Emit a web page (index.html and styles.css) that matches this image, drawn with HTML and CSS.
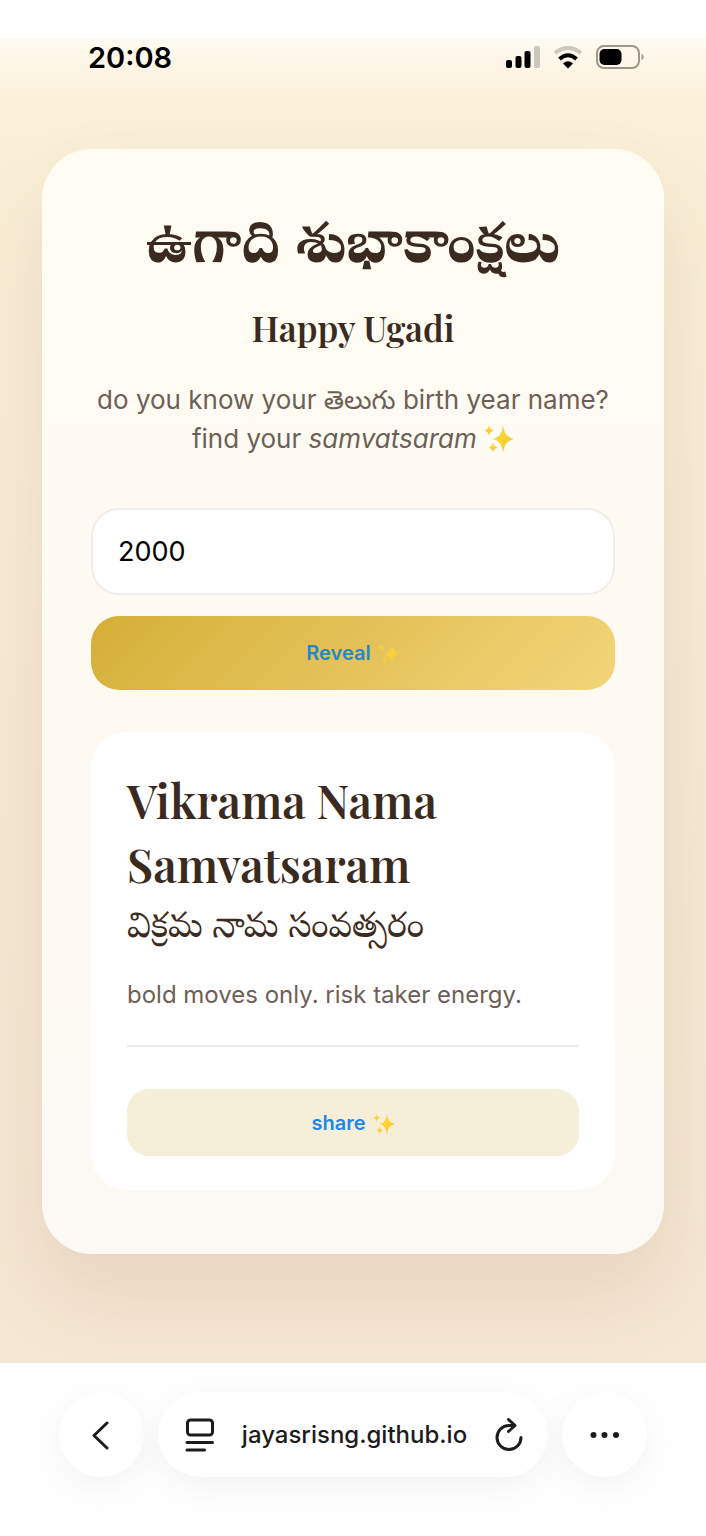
FILE: index.html
```html
<!DOCTYPE html>
<html lang="en">
<head>
    <meta charset="UTF-8">
    <meta name="viewport" content="width=device-width, initial-scale=1.0">
    <title>Happy Ugadi</title>
    <link rel="stylesheet" href="styles.css">
</head>
<body>
    <svg width="0" height="0" class="defs" aria-hidden="true">
        <linearGradient id="gold" x1="0" y1="0" x2="1" y2="1">
            <stop offset="0" stop-color="#f6cf62"/>
            <stop offset="0.5" stop-color="#fdd42c"/>
            <stop offset="1" stop-color="#efb455"/>
        </linearGradient>
        <symbol id="sparkles" viewBox="0 0 30 30">
            <path fill="url(#gold)" d="M19 1 Q20 13 30 15 Q20 17 19 29 Q18 17 9 15 Q18 13 19 1Z"/>
            <path fill="url(#gold)" d="M5 1 Q5.500 5.500 10 6.500 Q5.500 7.500 5 12 Q4.500 7.500 0 6.500 Q4.500 5.500 5 1Z"/>
            <path fill="url(#gold)" d="M9 18 Q9.500 22.500 13.500 23.500 Q9.500 24.500 9 29 Q8.500 24.500 4.500 23.500 Q8.500 22.500 9 18Z"/>
        </symbol>
    </svg>

    <div class="page">
        <header class="status-bar">
            <span class="time">20:08</span>
            <div class="status-icons">
                <svg width="35" height="24" viewBox="0 0 35 24">
                    <rect x="1" y="15" width="6" height="8" rx="2"/>
                    <rect x="10.500" y="11" width="6" height="12" rx="2"/>
                    <rect x="19.500" y="6" width="6" height="17" rx="2"/>
                    <rect x="29" y="1" width="6" height="22" rx="2" fill="#cbc7bb"/>
                </svg>
                <svg width="30" height="24" viewBox="0 0 30 24" fill="none" stroke-width="4">
                    <path d="M2 8 Q15 -2 28 8" stroke="#cbc7bb"/>
                    <path d="M6.500 14 Q15 6.500 23.500 14" stroke="#000"/>
                    <path d="M10 18.500 Q15 14 20 18.500 L15 23.500Z" fill="#000"/>
                </svg>
                <svg width="48" height="24" viewBox="0 0 48 24">
                    <rect x="1" y="1" width="42" height="22" rx="7" fill="none" stroke="#9c978d" stroke-width="2"/>
                    <rect x="3.500" y="4" width="22" height="16" rx="5"/>
                    <path d="M45.500 8.500 Q50 12 45.500 15.500Z" fill="#9c978d"/>
                </svg>
            </div>
        </header>

        <main class="card">
            <h1 lang="te">ఉగాది శుభాకాంక్షలు</h1>
            <h2>Happy Ugadi</h2>
            <p class="subtitle">do you know your <span lang="te">తెలుగు</span> birth year name?<br>find your <em>samvatsaram</em> <svg class="sparkle"><use href="#sparkles"/></svg></p>

            <form id="yearForm">
                <input type="text" id="year" name="year" value="2000" inputmode="numeric" aria-label="Birth year">
                <button type="button" class="reveal">Reveal <svg class="sparkle-small"><use href="#sparkles"/></svg></button>
            </form>

            <section class="result">
                <h3>Vikrama Nama Samvatsaram</h3>
                <p class="telugu-name" lang="te">విక్రమ నామ సంవత్సరం</p>
                <p class="meaning">bold moves only. risk taker energy.</p>
                <hr>
                <button type="button" class="share">share <svg class="sparkle-small"><use href="#sparkles"/></svg></button>
            </section>
        </main>
    </div>

    <nav class="browser-bar">
        <button type="button" class="round" aria-label="Back">
            <svg width="20" height="30" viewBox="0 0 20 30"><path d="M15 3 L2 15.500 L15 28"/></svg>
        </button>
        <div class="address">
            <button type="button" aria-label="Page menu">
                <svg width="30" height="34" viewBox="0 0 30 34">
                    <rect x="2.500" y="2" width="25" height="15" rx="3"/>
                    <path d="M2 24.500 H27.500 M2 32 H19.500"/>
                </svg>
            </button>
            <a href="#">jayasrisng.github.io</a>
            <button type="button" aria-label="Reload">
                <svg width="30" height="34" viewBox="0 0 30 34">
                    <path d="M27 19.500 A12 12 0 1 1 15 7.500 H21 M14.500 1.500 L21 7.500 L14.500 13.500"/>
                </svg>
            </button>
        </div>
        <button type="button" class="round" aria-label="More">
            <svg class="dots" width="30" height="8" viewBox="0 0 30 8"><circle cx="3.500" cy="4" r="3"/><circle cx="14.500" cy="4" r="3"/><circle cx="26" cy="4" r="3"/></svg>
        </button>
    </nav>
</body>
</html>
```

FILE: styles.css
```css
* {
    box-sizing: border-box;
}

body {
    font-family: Inter, "Noto Sans Telugu", "Noto Sans", sans-serif;
    background-color: #fff;
    margin: 0;
    padding-top: 39px;
    min-height: 100vh;
}

h1, h2, h3, p {
    margin: 0;
}

button {
    font-family: inherit;
    border: none;
    cursor: pointer;
}

.defs {
    position: absolute;
}

.page {
    padding: 0 42px 109px;
    background: linear-gradient(180deg, #fffaf0 0, #fbf0da 60px, #f9edd5 200px, #f6e8d4 60%, #f5e6d3 100%);
    overflow: hidden;
}

.status-bar {
    display: flex;
    justify-content: space-between;
    align-items: center;
    height: 36px;
    margin-bottom: 74px;
    padding: 0 20px 0 46px;
}

.time {
    font-size: 29px;
    font-weight: 600;
}

.status-icons {
    display: flex;
    gap: 13px;
}

.card {
    padding: 64px 49px;
    border-radius: 50px;
    background: linear-gradient(180deg, #fffcf4, #fefaf2 60%, #fcf8f4);
    box-shadow: 0 40px 80px rgba(120, 80, 50, 0.12);
    color: #3b2a20;
    text-align: center;
}

h1 {
    padding-top: 6px;
    font-family: "Noto Serif Telugu", "Liberation Serif", serif;
    font-size: 56px;
    font-weight: 700;
    line-height: 64px;
    white-space: nowrap;
}

h2 {
    margin-top: 21px;
    font-family: "Playfair Display", "Liberation Serif", serif;
    font-size: 35px;
    font-weight: 600;
    line-height: 48px;
}

.subtitle {
    margin-top: 28px;
    color: #6d5f57;
    font-size: 26px;
    line-height: 39px;
}

.sparkle {
    width: 30px;
    height: 30px;
    vertical-align: -6px;
}

.sparkle-small {
    width: 22px;
    height: 22px;
    margin-left: 2px;
    vertical-align: -5px;
}

form {
    display: flex;
    flex-direction: column;
    gap: 21px;
    margin-top: 50px;
}

#year {
    width: 100%;
    height: 87px;
    padding: 0 25px;
    border: 2px solid #f0edea;
    border-radius: 28px;
    background-color: #fff;
    color: #000;
    font-family: inherit;
    font-size: 27px;
}

.reveal {
    height: 74px;
    border-radius: 28px;
    background: linear-gradient(135deg, #d4af37, #f3d57a);
    color: #2488c4;
    font-size: 20px;
    font-weight: 600;
}

.reveal svg {
    opacity: 0.8;
}

.result {
    margin-top: 42px;
    padding: 36px 36px 34px;
    border-radius: 36px;
    background-color: #fff;
    text-align: left;
}

h3 {
    font-family: "Playfair Display", "Liberation Serif", serif;
    font-size: 46px;
    font-weight: 600;
    line-height: 64px;
}

.telugu-name {
    padding-top: 8px;
    font-family: "Noto Serif Telugu", "Liberation Serif", serif;
    font-size: 35px;
    line-height: 54px;
}

.meaning {
    margin-top: 18px;
    color: #6d5f57;
    font-size: 24px;
    line-height: 38px;
}

hr {
    margin: 31px 0 42px;
    border: none;
    border-top: 2px solid #ececec;
}

.share {
    width: 100%;
    height: 67px;
    border-radius: 22px;
    background-color: #f5eed8;
    color: #1d86e8;
    font-size: 20px;
    font-weight: 600;
}

.browser-bar {
    display: flex;
    justify-content: center;
    gap: 14px;
    padding: 29px 59px 60px;
}

.browser-bar svg {
    display: block;
    fill: none;
    stroke: #1c1c1c;
    stroke-width: 3;
    stroke-linecap: round;
    stroke-linejoin: round;
}

.browser-bar .dots {
    fill: #1c1c1c;
    stroke: none;
}

.browser-bar button {
    background: none;
    padding: 0;
}

.browser-bar .round,
.address {
    display: flex;
    align-items: center;
    justify-content: center;
    height: 85px;
    border-radius: 43px;
    background-color: #fff;
    box-shadow: 0 10px 40px rgba(0, 0, 0, 0.06);
}

.browser-bar .round {
    flex: 0 0 85px;
}

.address {
    flex: 1;
    justify-content: space-between;
    padding: 0 24px 0 27px;
}

.address a {
    color: #1c1c1c;
    font-size: 24px;
    font-weight: 500;
    text-decoration: none;
}
```
